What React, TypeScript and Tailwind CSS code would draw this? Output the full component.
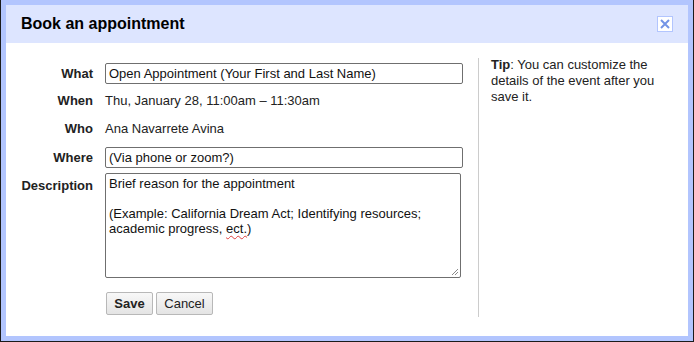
import * as React from 'react';

const font = { fontFamily: '"Liberation Sans", Arial, sans-serif' };

function Label({ children, top = false }: { children: React.ReactNode; top?: boolean }) {
  return (
    <div
      className={
        'w-[87px] shrink-0 text-right text-[13px] font-bold leading-[16px] text-[#222] ' +
        (top ? 'self-start pt-[5px]' : '')
      }
    >
      {children}
    </div>
  );
}

function TextInput({ value }: { value: string }) {
  return (
    <div className="flex h-[21px] w-[358px] items-center rounded-[2px] border border-[#6f6f6f] bg-white pl-[3px] text-[13px] leading-[16px] text-[#111]">
      {value}
    </div>
  );
}

export default function App() {
  return (
    <div
      style={font}
      className="flex h-[342px] w-[694px] flex-col border-b border-l border-r border-[#1b1b1b] bg-[#b2c5fe] px-[5px] pt-[5px] pb-[5px]"
    >
      <div className="flex h-[38px] shrink-0 items-center justify-between bg-[#dde5ff] pl-[15px] pr-[15px]">
        <h1 className="text-[16px] font-bold leading-[18px] text-black">Book an appointment</h1>
        <button className="flex h-[16px] w-[16px] items-center justify-center border border-[#b2c5fe] bg-white">
          <svg width="10" height="10" viewBox="0 0 10 10">
            <path d="M1 1L9 9M9 1L1 9" stroke="#7394e6" strokeWidth="2" />
          </svg>
        </button>
      </div>

      <div className="flex flex-1 items-start bg-white">
        <div className="flex w-[472px] shrink-0 flex-col pt-[20px] text-[13px] leading-[16px] text-[#222]">
          <div className="flex h-[21px] items-center gap-[12px]">
            <Label>What</Label>
            <TextInput value="Open Appointment (Your First and Last Name)" />
          </div>
          <div className="mt-[3px] flex h-[28px] items-center gap-[12px]">
            <Label>When</Label>
            <span>Thu, January 28, 11:00am – 11:30am</span>
          </div>
          <div className="flex h-[28px] items-center gap-[12px]">
            <Label>Who</Label>
            <span>Ana Navarrete Avina</span>
          </div>
          <div className="mt-[4px] flex h-[21px] items-center gap-[12px]">
            <Label>Where</Label>
            <TextInput value="(Via phone or zoom?)" />
          </div>
          <div className="mt-[5px] flex gap-[12px]">
            <Label top>Description</Label>
            <div className="relative h-[105px] w-[356px] rounded-[2px] border border-[#6f6f6f] bg-white pl-[3px] pt-[2px] leading-[15px] text-[#111]">
              <div>Brief reason for the appointment</div>
              <div>&nbsp;</div>
              <div>(Example: California Dream Act; Identifying resources;</div>
              <div>
                academic progress,{' '}
                <span className="underline decoration-[#e04040] decoration-wavy decoration-[1px] underline-offset-[2px]">
                  ect.
                </span>
                )
              </div>
              <svg className="absolute bottom-[1px] right-[1px]" width="8" height="8" viewBox="0 0 8 8">
                <path d="M7 1L1 7M7 4L4 7" stroke="#8a8a8a" strokeWidth="1" />
              </svg>
            </div>
          </div>
          <div className="mt-[14px] flex gap-[3px] pl-[100px]">
            <button className="h-[23px] w-[47px] rounded-[2px] border border-[#b8b8b8] bg-gradient-to-b from-[#f8f8f8] to-[#e4e4e4] text-[13px] font-bold text-[#222]">
              Save
            </button>
            <button className="h-[23px] w-[57px] rounded-[2px] border border-[#b8b8b8] bg-gradient-to-b from-[#f8f8f8] to-[#e4e4e4] text-[13px] text-[#222]">
              Cancel
            </button>
          </div>
        </div>

        <div className="mt-[15px] h-[259px] w-px shrink-0 bg-[#cccccc]" />

        <div className="w-[180px] pl-[12px] pt-[14px] text-[13px] leading-[16px] text-[#222]">
          <span className="font-bold">Tip</span>: You can customize the details of the event after you save it.
        </div>
      </div>
    </div>
  );
}
